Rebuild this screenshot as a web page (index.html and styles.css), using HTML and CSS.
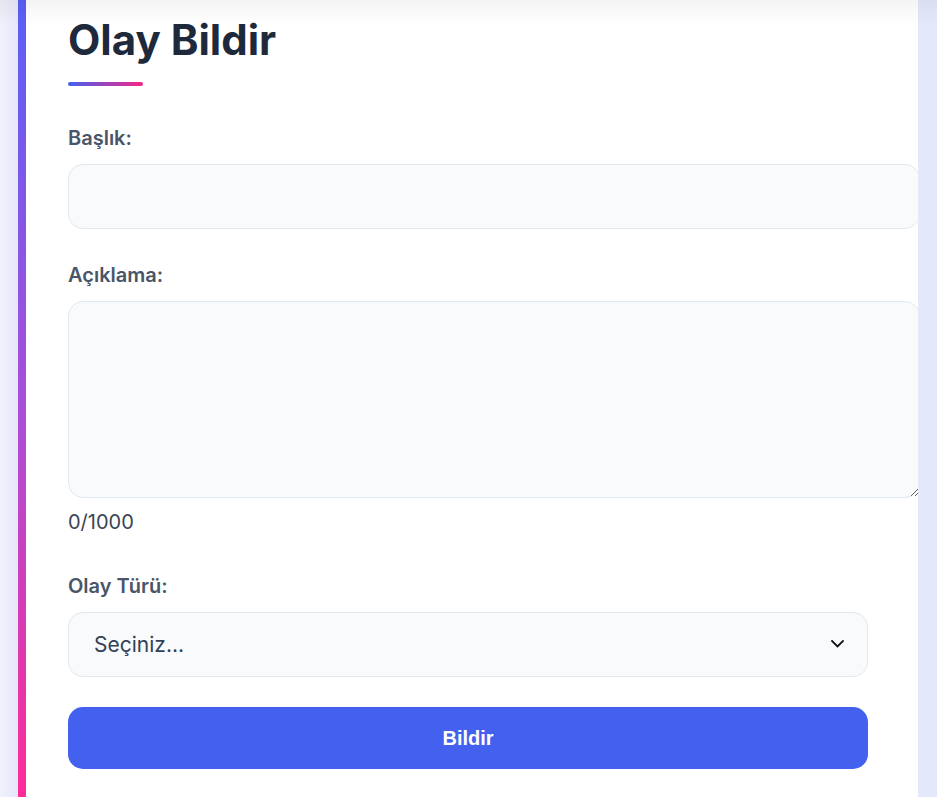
FILE: index.html
```html
<!DOCTYPE html>
<html lang="tr">
<head>
<meta charset="utf-8">
<title>Olay Bildir</title>
<link rel="stylesheet" href="styles.css">
</head>
<body>
<div class="page">
  <main class="card">
    <h1 class="title">Olay Bildir</h1>
    <form class="form">
      <div class="group">
        <label class="label" for="baslik">Başlık:</label>
        <input class="field" id="baslik" type="text">
      </div>
      <div class="group group-text">
        <label class="label" for="aciklama">Açıklama:</label>
        <textarea class="field area" id="aciklama"></textarea>
        <div class="counter">0/1000</div>
      </div>
      <div class="group group-select">
        <label class="label" for="tur">Olay Türü:</label>
        <div class="select-wrap">
          <select class="select" id="tur">
            <option>Seçiniz...</option>
          </select>
          <svg class="chevron" width="13" height="8" viewBox="0 0 13 8" aria-hidden="true">
            <polyline points="1,1 6.5,6.5 12,1" fill="none" stroke="#111" stroke-width="1.8" stroke-linecap="square"/>
          </svg>
        </div>
      </div>
      <button class="submit" type="button">Bildir</button>
    </form>
  </main>
</div>
</body>
</html>
```
FILE: styles.css
```css
html, body {
  margin: 0;
  padding: 0;
}

body {
  background: linear-gradient(90deg, #f0f1fb 0, #e5e8fa 18px, #e4e8fb 100%);
  font-family: "Inter", "Noto Sans", sans-serif;
  position: relative;
  min-height: 797px;
}

body::before {
  content: "";
  position: absolute;
  top: 0;
  left: 0;
  right: 0;
  height: 26px;
  background: linear-gradient(to bottom, rgba(0, 0, 0, 0.045), rgba(0, 0, 0, 0));
  pointer-events: none;
  z-index: 2;
}

.page {
  padding-left: 18px;
}

.card {
  position: relative;
  box-sizing: border-box;
  width: 900px;
  background: #ffffff;
  padding: 15px 50px 32px;
  overflow: hidden;
}

.card::before {
  content: "";
  position: absolute;
  top: 0;
  bottom: 0;
  left: 0;
  width: 8px;
  background: linear-gradient(to bottom, #5a5ff6 0%, #a74fd9 50%, #ff2b96 100%);
}

.title {
  margin: 0;
  font-size: 42px;
  line-height: 50px;
  font-weight: 700;
  color: #1e293b;
}

.title::after {
  content: "";
  display: block;
  width: 75px;
  height: 4px;
  margin-top: 17px;
  border-radius: 2px;
  background: linear-gradient(90deg, #4361ee, #f72585);
}

.form {
  margin-top: 40px;
}

.group {
  margin-bottom: 34px;
}

.group-text {
  margin-bottom: 40px;
}

.group-select {
  margin-bottom: 30px;
}

.label {
  display: block;
  font-size: 20px;
  line-height: 24px;
  font-weight: 600;
  color: #4a5568;
  margin-bottom: 14px;
}

.field {
  display: block;
  box-sizing: content-box;
  width: 100%;
  padding: 20px 25px;
  height: 23px;
  border: 1px solid #e2e8f0;
  border-radius: 15px;
  background: #f8fafc;
  font-family: "Inter", sans-serif;
  font-size: 19px;
  color: #334155;
  outline: none;
  margin: 0;
}

.area {
  height: 155px;
  resize: both;
}

.counter {
  margin-top: 12px;
  font-size: 20px;
  line-height: 24px;
  color: #3a4556;
}

.select-wrap {
  position: relative;
}

.select {
  display: block;
  box-sizing: border-box;
  width: 100%;
  height: 65px;
  padding: 0 25px;
  border: 1px solid #e2e8f0;
  border-radius: 15px;
  background: #f8fafc;
  font-family: "Inter", sans-serif;
  font-size: 21px;
  color: #334155;
  -webkit-appearance: none;
  appearance: none;
  outline: none;
  margin: 0;
}

.chevron {
  position: absolute;
  right: 24px;
  top: 28px;
  pointer-events: none;
}

.submit {
  display: block;
  width: 100%;
  height: 62px;
  border: none;
  border-radius: 15px;
  background: #4361ee;
  color: #ffffff;
  font-family: "Liberation Sans", Arial, sans-serif;
  font-size: 20px;
  font-weight: 700;
  cursor: pointer;
  margin: 0;
}
```
